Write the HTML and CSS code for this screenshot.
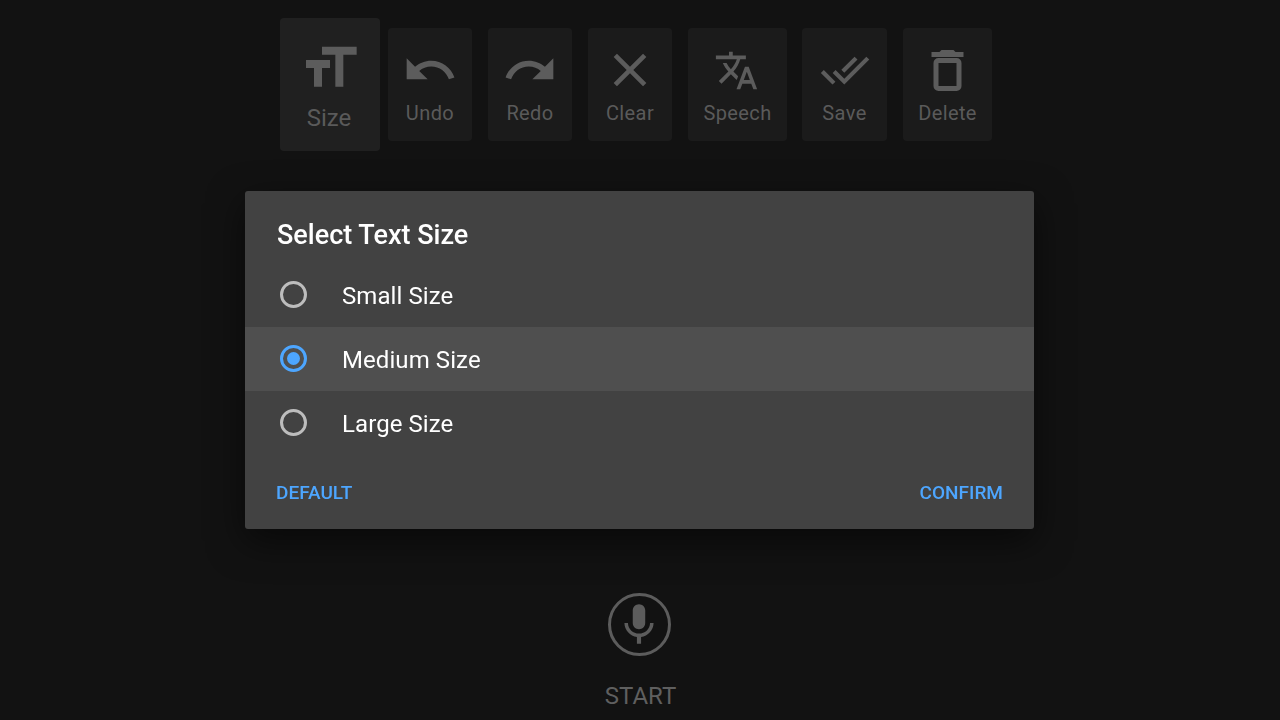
FILE: index.html
```html
<!DOCTYPE html>
<html lang="en">
<head>
  <meta charset="UTF-8" />
  <meta name="viewport" content="width=device-width, initial-scale=1.0"/>
  <title>Select Text Size</title>
  <link rel="stylesheet" href="styles.css">
</head>
<body>

  <section class="toolbar">
    <button class="tool tool-size">
      <svg class="icon icon-64" viewBox="0 0 24 24"><path d="M9 4v3h5v12h3V7h5V4H9zm-6 8h3v7h3v-7h3V9H3v3z"/></svg>
      <span>Size</span>
    </button>
    <button class="tool tool-undo">
      <svg class="icon" viewBox="0 0 24 24"><path d="M12.5 8c-2.65 0-5.05.99-6.9 2.6L2 7v9h9l-3.62-3.62c1.39-1.16 3.16-1.88 5.12-1.88 3.54 0 6.55 2.31 7.6 5.5l2.37-.78C21.08 11.03 17.15 8 12.5 8z"/></svg>
      <span>Undo</span>
    </button>
    <button class="tool tool-redo">
      <svg class="icon" viewBox="0 0 24 24"><path d="M18.4 10.6C16.55 8.99 14.15 8 11.5 8c-4.65 0-8.58 3.03-9.96 7.22L3.9 16c1.05-3.19 4.05-5.5 7.6-5.5 1.95 0 3.73.72 5.12 1.88L13 16h9V7l-3.6 3.6z"/></svg>
      <span>Redo</span>
    </button>
    <button class="tool tool-clear">
      <svg class="icon" viewBox="0 0 24 24"><path d="M19 6.41L17.59 5 12 10.59 6.41 5 5 6.41 10.59 12 5 17.59 6.41 19 12 13.41 17.59 19 19 17.59 13.41 12z"/></svg>
      <span>Clear</span>
    </button>
    <button class="tool tool-speech">
      <svg class="icon" viewBox="0 0 24 24"><path d="M12.87 15.07l-2.54-2.51.03-.03c1.74-1.94 2.98-4.17 3.64-6.53H17V4h-7V2H8v2H1v1.99h11.17C11.5 7.92 10.44 9.75 9 11.35 8.07 10.32 7.3 9.19 6.69 8h-2c.73 1.63 1.73 3.17 2.98 4.56l-5.09 5.02L4 19l5-5 3.11 3.11.76-2.04zM18.5 10h-2L12 22h2l1.12-3h4.75L21 22h2l-4.5-12zm-2.62 7l1.62-4.33L19.12 17h-3.24z"/></svg>
      <span>Speech</span>
    </button>
    <button class="tool tool-save">
      <svg class="icon" viewBox="0 0 24 24"><path d="M18 7l-1.41-1.41-6.34 6.34 1.41 1.41L18 7zm4.24-1.41L11.66 16.17 7.48 12l-1.41 1.41L11.66 19l12-12-1.42-1.41zM.41 13.41L6 19l1.41-1.41L1.83 12 .41 13.41z"/></svg>
      <span>Save</span>
    </button>
    <button class="tool tool-delete">
      <svg class="icon" viewBox="0 0 56 56"><path d="M11.5 10h8l2-2h12l2 2h8v5h-32z"/><rect class="bin" x="16" y="18.5" width="23" height="28" rx="2.5"/></svg>
      <span>Delete</span>
    </button>
  </section>

  <section class="start">
    <div class="mic">
      <svg viewBox="0 0 24 24"><path d="M12 14c1.66 0 2.99-1.34 2.99-3L15 5c0-1.66-1.34-3-3-3S9 3.34 9 5v6c0 1.66 1.34 3 3 3zm5.3-3c0 3-2.54 5.1-5.3 5.1S6.7 14 6.7 11H5c0 3.41 2.72 6.23 6 6.72V21h2v-3.28c3.28-.48 6-3.3 6-6.72h-1.7z"/></svg>
    </div>
    <p>START</p>
  </section>

  <div class="dialog">
    <h2>Select Text Size</h2>
    <div class="option"><span class="radio"></span><span>Small Size</span></div>
    <div class="option selected"><span class="radio"></span><span>Medium Size</span></div>
    <div class="option"><span class="radio"></span><span>Large Size</span></div>
    <div class="actions">
      <a href="#">DEFAULT</a>
      <a href="#">CONFIRM</a>
    </div>
  </div>

</body>
</html>
```

FILE: styles.css
```css
* { margin: 0; padding: 0; box-sizing: border-box; }
html, body { height: 100%; overflow: hidden; }
body { font-family: Roboto, 'Liberation Sans', sans-serif; background: #121212; color: #5c5c5c; }

.toolbar { display: flex; align-items: center; padding: 18px 0 0 280px; height: 151px; }
.tool { display: flex; flex-direction: column; align-items: center; height: 113px; padding-top: 14px; border: none; border-radius: 4px; background: #1b1b1b; color: #5a5a5a; font: 400 20px Roboto, sans-serif; letter-spacing: .4px; }
.tool span { line-height: 30px; }
.tool .icon { width: 56px; height: 56px; fill: #5c5c5c; flex: none; }
.tool-size { width: 100px; height: 133px; padding-top: 18px; margin-right: 8px; background: #202020; font-size: 24px; letter-spacing: 0; }
.tool-size .icon-64 { width: 64px; height: 64px; }
.tool-size span { margin: 3px 2px 0 0; }
.tool-undo, .tool-redo, .tool-clear { width: 84px; margin-right: 16px; }
.tool-speech { width: 99px; margin-right: 15px; }
.tool-save { width: 85px; margin-right: 16px; }
.tool-delete { width: 89px; }
.tool-speech .icon { width: 45px; height: 45px; margin: 6px 2px 5px 0; }
.tool-save .icon { width: 50px; height: 50px; margin: 3px 0; }
.bin { fill: none; stroke: #5c5c5c; stroke-width: 5; }

.start { display: flex; flex-direction: column; align-items: center; margin-top: 442px; padding-right: 1px; }
.mic { display: flex; align-items: center; justify-content: center; width: 63px; height: 63px; border: 3px solid #5c5c5c; border-radius: 50%; margin-right: 1px; }
.mic svg { width: 50px; height: 50px; fill: #5c5c5c; flex: none; }
.start p { font-size: 24px; line-height: 30px; margin-top: 25px; margin-left: 2px; color: #5f5f5f; }

/* dialog floats over the page */
.dialog { position: fixed; left: 245px; top: 191px; width: 789px; height: 338px; background: #424242; border-radius: 3px; box-shadow: 0 12px 36px rgba(0,0,0,.55); color: #fff; }
.dialog h2 { font-size: 27px; font-weight: 500; line-height: 32px; padding: 28px 32px 12px; height: 72px; }
.option { display: flex; align-items: center; height: 64px; padding-left: 35px; font-size: 24px; letter-spacing: .08px; }
.option span:last-child { margin-top: 2px; }
.option.selected { background: #4f4f4f; }
.radio { position: relative; width: 27px; height: 27px; margin: -2px 35px 0 0; border: 3px solid #bdbdbd; border-radius: 50%; }
.selected .radio { border-color: #4da6ff; }
.selected .radio::after { content: ""; position: absolute; left: 4px; top: 4px; width: 13px; height: 13px; border-radius: 50%; background: #4da6ff; }
.actions { display: flex; justify-content: space-between; padding: 26px 31px 0 31px; }
.actions a { color: #4da6ff; font-size: 19px; font-weight: 500; line-height: 24px; text-decoration: none; }
```
